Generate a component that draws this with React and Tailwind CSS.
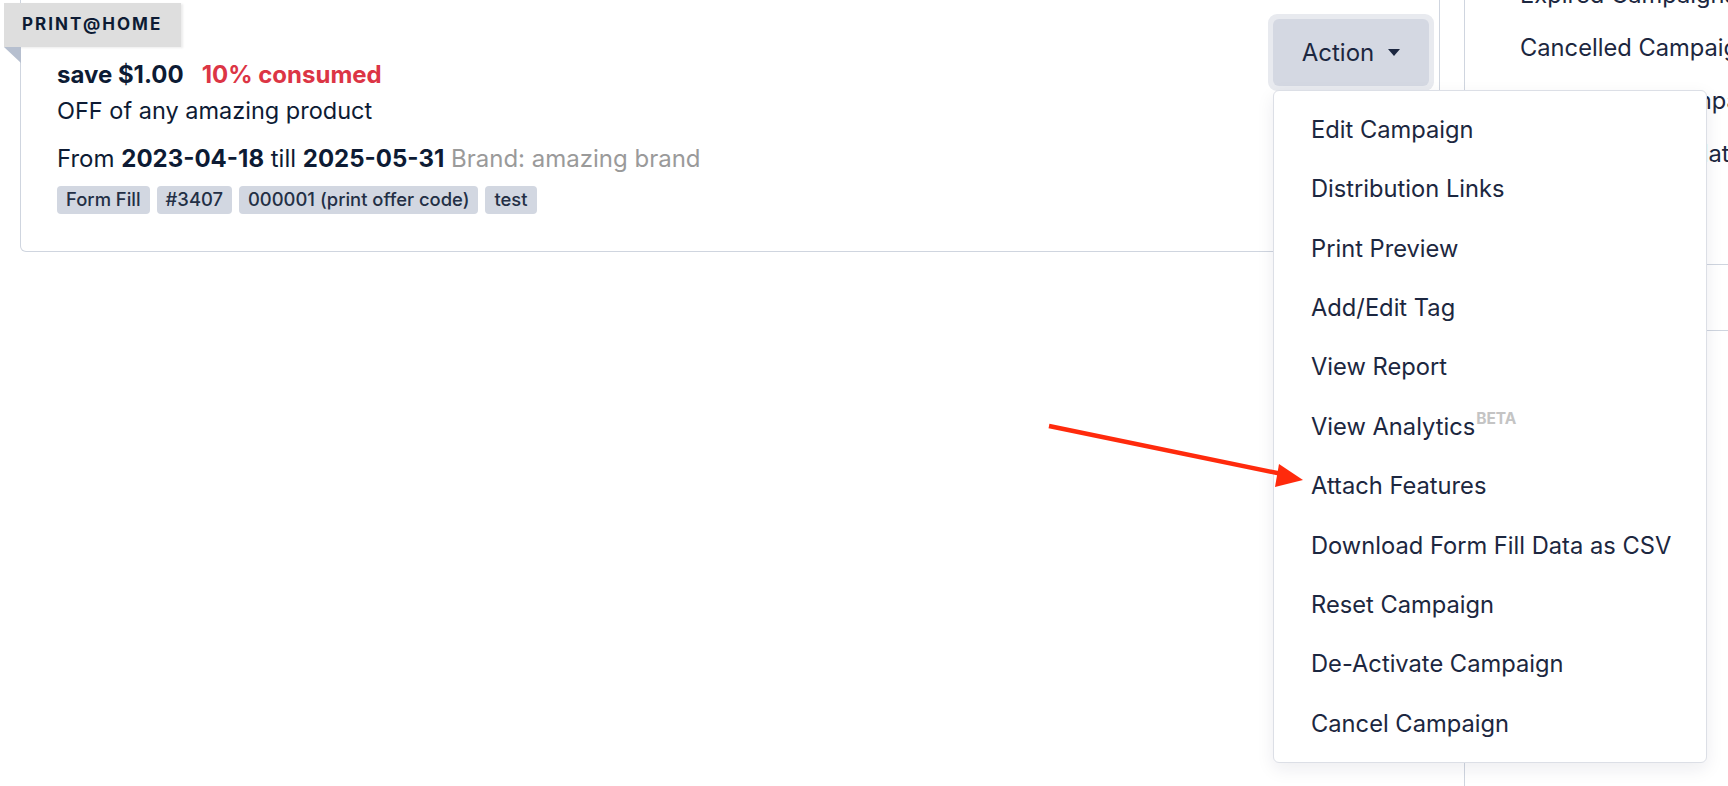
import React from "react";

const menuItems = [
  "Edit Campaign",
  "Distribution Links",
  "Print Preview",
  "Add/Edit Tag",
  "View Report",
  "View Analytics",
  "Attach Features",
  "Download Form Fill Data as CSV",
  "Reset Campaign",
  "De-Activate Campaign",
  "Cancel Campaign",
];

const tags = ["Form Fill", "#3407", "000001 (print offer code)", "test"];

function ActionMenu() {
  return (
    <div className="absolute left-[5px] top-[76px] z-20 w-[434px] rounded-[6px] border border-[#dcdfe6] bg-white py-[9px] shadow-[0_6px_18px_rgba(20,30,60,0.08)]">
      {menuItems.map((item) => (
        <div
          key={item}
          className="flex h-[59.4px] items-center whitespace-nowrap pl-[37px] text-[23.7px] text-[#1c2740]"
        >
          {item}
          {item === "View Analytics" && (
            <span className="ml-[1px] self-start pt-[14px] text-[15.5px] font-bold leading-none text-[#c4c4c4]">BETA</span>
          )}
        </div>
      ))}
    </div>
  );
}

function CampaignCard() {
  return (
    <div className="relative rounded-b-[6px] border border-t-0 border-[#cfd5df] bg-white pl-[36px] pr-[10px] pt-[57px] pb-[37px]">
      {/* ribbon */}
      <div className="absolute left-[-17px] top-[3px] flex h-[44px] w-[177px] items-center bg-[#dedede] pl-[18px] shadow-[2px_1px_2px_rgba(0,0,0,0.08)]">
        <span className="text-[17px] font-bold tracking-[0.12em] text-[#0d1b34]">PRINT@HOME</span>
      </div>
      <div className="absolute left-[-17px] top-[47px] h-0 w-0 border-l-[17px] border-t-[16px] border-l-transparent border-t-[#b6bfcf]" />

      <div className="flex">
        <div className="flex-1">
          <div className="flex h-[36px] items-center gap-[18px] text-[24px] font-bold">
            <span className="text-[#0d1b34]">save $1.00</span>
            <span className="text-[#dc3545]">10% consumed</span>
          </div>
          <div className="flex h-[36px] items-center text-[23.5px] text-[#0d1b34]">OFF of any amazing product</div>
          <div className="mt-[12px] flex h-[36px] items-center whitespace-nowrap text-[24px] text-[#0d1b34]">
            <span>
              From <b>2023-04-18</b> till <b>2025-05-31</b>{" "}
              <span className="text-[#9a9a9a]">Brand: amazing brand</span>
            </span>
          </div>
          <div className="mt-[9px] flex gap-[7px]">
            {tags.map((t) => (
              <span
                key={t}
                className="flex h-[28px] items-center whitespace-nowrap rounded-[4px] bg-[#d2d7e1] px-[9px] text-[18.4px] font-medium text-[#232f45]"
              >
                {t}
              </span>
            ))}
          </div>
        </div>
      </div>
    </div>
  );
}

export default function App() {
  return (
    <div
      className="relative flex h-[786px] w-[1728px] overflow-hidden bg-white"
      style={{ fontFamily: "Inter, 'Noto Sans', sans-serif" }}
    >
      {/* main column */}
      <div className="relative w-[1464px] shrink-0 pl-[20px] pr-[24px]">
        <CampaignCard />

        {/* action dropdown */}
        <div className="absolute left-[1268px] top-[14px] z-10">
          <div className="rounded-[9px] bg-[#e8eaef] p-[5px]">
            <button className="flex h-[67px] w-[156px] items-center justify-center gap-[14px] rounded-[6px] bg-[#d4d8e2] text-[24px] text-[#1c2740]">
              Action
              <span className="h-0 w-0 border-x-[6.5px] border-t-[7px] border-x-transparent border-t-[#1c2740]" />
            </button>
          </div>
          <ActionMenu />
        </div>
      </div>

      {/* sidebar */}
      <div className="flex-1 border-l border-[#cfd5df]">
        <div className="mt-[-32px] flex flex-col pl-[55px] text-[23.7px] text-[#1c2740]">
          <div className="flex h-[53px] items-center whitespace-nowrap">Expired Campaigns</div>
          <div className="flex h-[53px] items-center whitespace-nowrap">Cancelled Campaigns</div>
          <div className="flex h-[53px] items-center whitespace-nowrap">Deactivated Campaigns</div>
          <div className="flex h-[53px] items-center whitespace-nowrap">Campaign Templates</div>
        </div>
        <div className="mt-[84px] h-[67px] border-y border-[#cfd5df]" />
      </div>

      {/* annotation arrow */}
      <svg className="pointer-events-none absolute left-0 top-0 z-30" width="1728" height="786">
        <line x1="1049" y1="426" x2="1282" y2="474" stroke="#ff2a0c" strokeWidth="4.5" />
        <polygon points="1303,480 1279,464 1275,487" fill="#ff2a0c" />
      </svg>
    </div>
  );
}
